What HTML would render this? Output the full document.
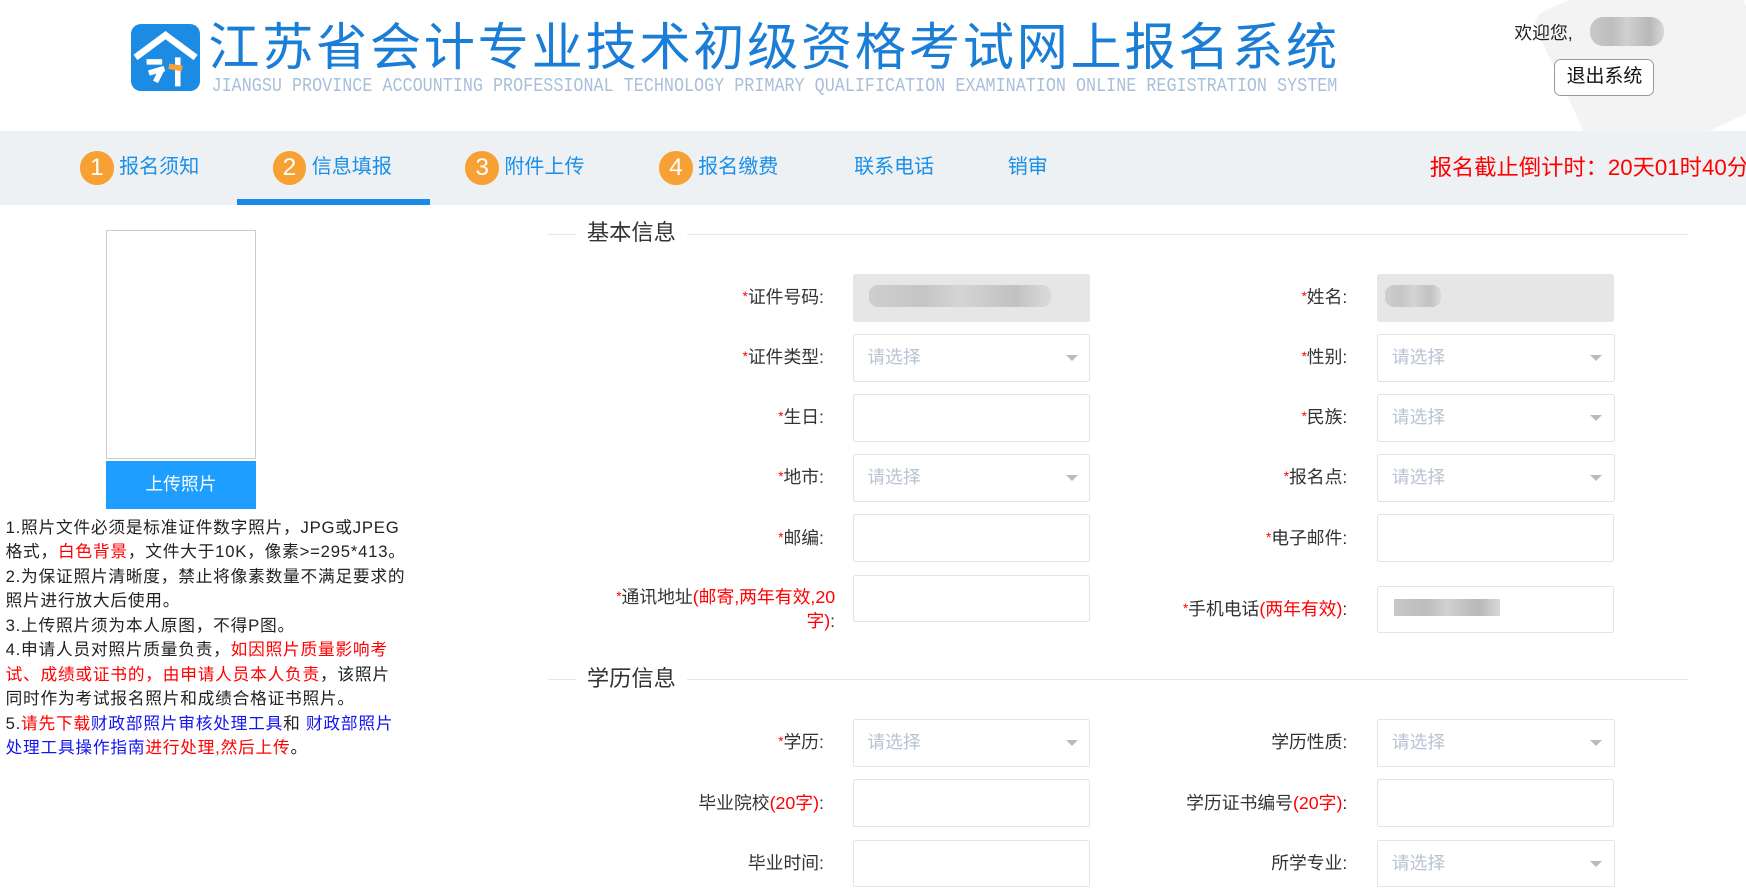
<!DOCTYPE html>
<html><head><meta charset="utf-8"><style>
html,body{margin:0;padding:0;overflow:hidden}
body{width:1568px;height:800px;zoom:1.11352;position:relative;background:#fff;font-family:"Liberation Sans","Noto Sans CJK SC",sans-serif;color:#333}
.a{position:absolute}
.nav{left:0;top:118px;width:1568px;height:66px;background:#eef1f4}
.ni{top:136px;height:30px;font-size:18px;color:#1a8fe8;line-height:30px;white-space:nowrap}
.c{display:inline-block;width:30px;height:30px;border-radius:50%;background:#f7a034;color:#fff;text-align:center;font-size:22px;line-height:30px;vertical-align:top;margin-right:5px}
.lbl{width:300px;text-align:right;font-size:16px;color:#333;line-height:22px}
.lbl b{color:#f00;font-weight:normal;font-size:12px;vertical-align:top}
.in{width:211px;height:41px;border:1px solid #e4e4e4;border-radius:2px;background:#fff}
.sel{color:#b9c3d3;font-size:16px;line-height:41px;padding-left:12px;box-sizing:border-box;width:213px;height:43px}
.sel:after{content:"";position:absolute;right:10px;top:18px;border:6px solid transparent;border-top:6px solid #bbb}
.sec{left:492px;width:1024px;height:1px;background:#e6e6e6}
.st{background:#fff;font-size:20px;color:#333;padding:0 10px;line-height:24px}
.note{left:5px;top:463px;width:362px;font-size:15px;line-height:22px;color:#222;letter-spacing:0.7px}
.r{color:#f00}.bl{color:#1515ee}
.blur{background:linear-gradient(90deg,#c8c8c8,#bdbdbd 30%,#d0d0d0 50%,#b8b8b8 80%,#d8d8d8)}
</style></head><body>
<div class="a" style="left:1400px;top:-30px;width:180px;height:160px;background:#f3f3f3;transform:rotate(-25deg);border-radius:12px"></div>
<div class="a" style="left:118px;top:22px;width:62px;height:60px;border-radius:9px;background:#1b8be3"></div>
<svg class="a" style="left:118px;top:22px" width="62" height="60"><path d="M4 30 L31 10 L58 30" stroke="#fff" stroke-width="6" fill="none"/><path d="M14 34h14M16 44l14-4M22 52l6-12M42 30v26" stroke="#fff" stroke-width="5" fill="none"/><path d="M34 38l12 2" stroke="#f7a034" stroke-width="5"/></svg>
<div class="a" style="left:187px;top:16px;font-size:46px;letter-spacing:2.4px;color:#1a7dd6;white-space:nowrap;line-height:54px">江苏省会计专业技术初级资格考试网上报名系统</div>
<div class="a" style="left:190px;top:68px;font-family:'Liberation Mono',monospace;font-size:15.05px;letter-spacing:0;color:#a9bfd9;white-space:nowrap;transform:scaleY(1.15);transform-origin:0 0">JIANGSU PROVINCE ACCOUNTING PROFESSIONAL TECHNOLOGY PRIMARY QUALIFICATION EXAMINATION ONLINE REGISTRATION SYSTEM</div>
<div class="a" style="left:1360px;top:19px;font-size:16px;color:#222;line-height:22px">欢迎您,</div>
<div class="a blur" style="left:1428px;top:15px;width:66px;height:26px;border-radius:12px"></div>
<div class="a" style="left:1396px;top:53px;width:88px;height:31px;border:1px solid #999;border-radius:6px;background:#fff;font-size:17px;color:#111;text-align:center;line-height:31px">退出系统</div>
<div class="a nav"></div>
<div class="a ni" style="left:72px"><span class="c">1</span>报名须知</div>
<div class="a ni" style="left:245px"><span class="c">2</span>信息填报</div>
<div class="a ni" style="left:418px"><span class="c">3</span>附件上传</div>
<div class="a ni" style="left:592px"><span class="c">4</span>报名缴费</div>
<div class="a ni" style="left:767px">联系电话</div>
<div class="a ni" style="left:905px">销审</div>
<div class="a" style="left:213px;top:179px;width:173px;height:5px;background:#1a8ae8"></div>
<div class="a" style="left:1284px;top:136px;font-size:20px;color:#f00;line-height:30px;white-space:nowrap">报名截止倒计时：20天01时40分</div>
<div class="a" style="left:95px;top:207px;width:133px;height:203px;border:1px solid #ccc"></div>
<div class="a" style="left:95px;top:414px;width:135px;height:43px;background:#1e9fff;color:#fff;font-size:16px;text-align:center;line-height:43px">上传照片</div>
<div class="a note">1.照片文件必须是标准证件数字照片，JPG或JPEG格式，<span class="r">白色背景</span>，文件大于10K，像素&gt;=295*413。<br>2.为保证照片清晰度，禁止将像素数量不满足要求的照片进行放大后使用。<br>3.上传照片须为本人原图，不得P图。<br>4.申请人员对照片质量负责，<span class="r">如因照片质量影响考试、成绩或证书的，由申请人员本人负责</span>，该照片<br>同时作为考试报名照片和成绩合格证书照片。<br>5.<span class="r">请先下载</span><span class="bl">财政部照片审核处理工具</span>和 <span class="bl">财政部照片处理工具操作指南</span><span class="r">进行处理,然后上传</span>。</div>
<div class="a sec" style="top:210px"></div><div class="a st" style="left:517px;top:198px">基本信息</div>
<div class="a sec" style="top:610px"></div><div class="a st" style="left:517px;top:598px">学历信息</div>

<div class="a lbl" style="left:440px;top:256px"><b>*</b>证件号码:</div>
<div class="a in" style="left:766px;top:246px;background:#e6e6e6;border-color:#e6e6e6"></div>
<div class="a blur" style="left:780px;top:256px;width:164px;height:20px;border-radius:8px;opacity:.8"></div>
<div class="a lbl" style="left:910px;top:256px"><b>*</b>姓名:</div>
<div class="a in" style="left:1237px;top:246px;background:#e6e6e6;border-color:#e6e6e6"></div>
<div class="a blur" style="left:1244px;top:256px;width:50px;height:20px;border-radius:8px;opacity:.8"></div>

<div class="a lbl" style="left:440px;top:310px"><b>*</b>证件类型:</div><div class="a in sel" style="left:766px;top:300px">请选择</div>
<div class="a lbl" style="left:910px;top:310px"><b>*</b>性别:</div><div class="a in sel" style="left:1237px;top:300px">请选择</div>
<div class="a lbl" style="left:440px;top:364px"><b>*</b>生日:</div><div class="a in" style="left:766px;top:354px"></div>
<div class="a lbl" style="left:910px;top:364px"><b>*</b>民族:</div><div class="a in sel" style="left:1237px;top:354px">请选择</div>
<div class="a lbl" style="left:440px;top:418px"><b>*</b>地市:</div><div class="a in sel" style="left:766px;top:408px">请选择</div>
<div class="a lbl" style="left:910px;top:418px"><b>*</b>报名点:</div><div class="a in sel" style="left:1237px;top:408px">请选择</div>
<div class="a lbl" style="left:440px;top:472px"><b>*</b>邮编:</div><div class="a in" style="left:766px;top:462px"></div>
<div class="a lbl" style="left:910px;top:472px"><b>*</b>电子邮件:</div><div class="a in" style="left:1237px;top:462px"></div>
<div class="a lbl" style="left:540px;top:525px;width:210px;line-height:22px"><b>*</b>通讯地址<span class="r">(邮寄,两年有效,20字)</span>:</div>
<div class="a in" style="left:766px;top:516px"></div>
<div class="a lbl" style="left:910px;top:536px"><b>*</b>手机电话<span class="r">(两年有效)</span>:</div>
<div class="a in" style="left:1237px;top:526px"></div>
<div class="a blur" style="left:1252px;top:538px;width:95px;height:15px"></div>

<div class="a lbl" style="left:440px;top:656px"><b>*</b>学历:</div><div class="a in sel" style="left:766px;top:646px">请选择</div>
<div class="a lbl" style="left:910px;top:656px">学历性质:</div><div class="a in sel" style="left:1237px;top:646px">请选择</div>
<div class="a lbl" style="left:440px;top:710px">毕业院校<span class="r">(20字)</span>:</div><div class="a in" style="left:766px;top:700px"></div>
<div class="a lbl" style="left:910px;top:710px">学历证书编号<span class="r">(20字)</span>:</div><div class="a in" style="left:1237px;top:700px"></div>
<div class="a lbl" style="left:440px;top:764px">毕业时间:</div><div class="a in" style="left:766px;top:754px"></div>
<div class="a lbl" style="left:910px;top:764px">所学专业:</div><div class="a in sel" style="left:1237px;top:754px">请选择</div>
</body></html>
